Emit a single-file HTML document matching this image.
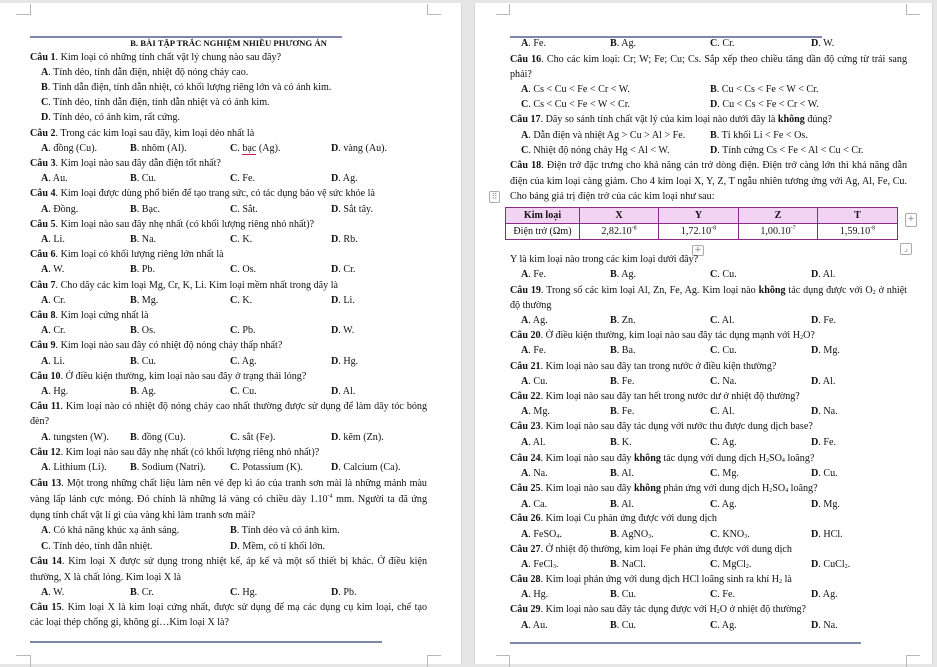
<!DOCTYPE html>
<html><head><meta charset="utf-8"><style>
*{margin:0;padding:0;box-sizing:border-box}
body{width:937px;height:667px;background:#e6e6e6;position:relative;overflow:hidden;font-family:"Liberation Serif","DejaVu Serif",serif;font-size:10.1px;color:#111}
.pg{position:absolute;top:3px;background:#fff;height:661px}
.l{position:absolute;white-space:nowrap;line-height:14px;height:14px}
.j{text-align:justify;text-align-last:justify;white-space:normal}
.o{position:absolute;white-space:nowrap}
b{font-weight:bold}
sub,sup{font-size:6px;line-height:0}
sub{vertical-align:-1px}
.rule{position:absolute;height:2px;background:#7b88a8}
.cm{position:absolute;border-color:#b8b8b8;border-style:solid;border-width:0}
table{border-collapse:collapse;position:absolute}
td{border:1.3px solid #8a2a8a;text-align:center;height:16px;font-size:10.1px;line-height:13px}
tr.h td{background:#f3d3f3;font-weight:bold}
.btn{position:absolute;width:12px;height:14px;border:1px solid #aaa;border-radius:2px;background:#fff;color:#888;font-size:11px;line-height:11px;text-align:center;font-family:"Liberation Sans",sans-serif}
</style></head><body>
<div class="pg" style="left:0;width:462px;border-right:1px solid #d4d4d4"></div>
<div class="pg" style="left:474px;width:459px;border-left:1px solid #d4d4d4;border-right:1px solid #d4d4d4"></div>
<div class="cm" style="left:16px;top:4px;width:15px;height:11px;border-right-width:1px;border-bottom-width:1px"></div>
<div class="cm" style="left:427px;top:4px;width:14px;height:11px;border-left-width:1px;border-bottom-width:1px"></div>
<div class="cm" style="left:16px;top:655px;width:15px;height:12px;border-right-width:1px;border-top-width:1px"></div>
<div class="cm" style="left:427px;top:655px;width:14px;height:12px;border-left-width:1px;border-top-width:1px"></div>
<div class="cm" style="left:496px;top:4px;width:14px;height:11px;border-right-width:1px;border-bottom-width:1px"></div>
<div class="cm" style="left:906px;top:4px;width:14px;height:11px;border-left-width:1px;border-bottom-width:1px"></div>
<div class="cm" style="left:496px;top:655px;width:14px;height:12px;border-right-width:1px;border-top-width:1px"></div>
<div class="cm" style="left:906px;top:655px;width:14px;height:12px;border-left-width:1px;border-top-width:1px"></div>

<div class="rule" style="left:30px;top:36px;width:312px"></div>
<div class="rule" style="left:30px;top:641px;width:352px"></div>
<div class="rule" style="left:510px;top:36px;width:312px"></div>
<div class="rule" style="left:510px;top:642px;width:351px"></div>

<!-- LEFT PAGE -->
<div class="l" style="left:30px;width:397px;top:36px;text-align:center;font-size:8.7px;font-weight:bold">B. BÀI TẬP TRẮC NGHIỆM NHIỀU PHƯƠNG ÁN</div>
<div class="l" style="left:30px;top:51px"><b>Câu 1</b>. Kim loại có những tính chất vật lý chung nào sau đây?</div>
<div class="l" style="left:41px;top:66px"><b>A</b>. Tính dẻo, tính dẫn điện, nhiệt độ nóng chảy cao.</div>
<div class="l" style="left:41px;top:81px"><b>B</b>. Tính dẫn điện, tính dẫn nhiệt, có khối lượng riêng lớn và có ánh kim.</div>
<div class="l" style="left:41px;top:96px"><b>C</b>. Tính dẻo, tính dẫn điện, tính dẫn nhiệt và có ánh kim.</div>
<div class="l" style="left:41px;top:111px"><b>D</b>. Tính dẻo, có ánh kim, rất cứng.</div>
<div class="l" style="left:30px;top:127px"><b>Câu 2</b>. Trong các kim loại sau đây, kim loại dẻo nhất là</div>
<div class="l" style="left:0;top:142px"><span class="o" style="left:41px"><b>A</b>. đồng (Cu).</span><span class="o" style="left:130px"><b>B</b>. nhôm (Al).</span><span class="o" style="left:230px"><b>C</b>. <span style="border-bottom:1px solid #d02050">bạc</span> (Ag).</span><span class="o" style="left:331px"><b>D</b>. vàng (Au).</span></div>
<div class="l" style="left:30px;top:157px"><b>Câu 3</b>. Kim loại nào sau đây dẫn điện tốt nhất?</div>
<div class="l" style="left:0;top:172px"><span class="o" style="left:41px"><b>A</b>. Au.</span><span class="o" style="left:130px"><b>B</b>. Cu.</span><span class="o" style="left:230px"><b>C</b>. Fe.</span><span class="o" style="left:331px"><b>D</b>. Ag.</span></div>
<div class="l" style="left:30px;top:187px"><b>Câu 4</b>. Kim loại được dùng phổ biến để tạo trang sức, có tác dụng bảo vệ sức khỏe là</div>
<div class="l" style="left:0;top:203px"><span class="o" style="left:41px"><b>A</b>. Đồng.</span><span class="o" style="left:130px"><b>B</b>. Bạc.</span><span class="o" style="left:230px"><b>C</b>. Sắt.</span><span class="o" style="left:331px"><b>D</b>. Sắt tây.</span></div>
<div class="l" style="left:30px;top:218px"><b>Câu 5</b>. Kim loại nào sau đây nhẹ nhất (có khối lượng riêng nhỏ nhất)?</div>
<div class="l" style="left:0;top:233px"><span class="o" style="left:41px"><b>A</b>. Li.</span><span class="o" style="left:130px"><b>B</b>. Na.</span><span class="o" style="left:230px"><b>C</b>. K.</span><span class="o" style="left:331px"><b>D</b>. Rb.</span></div>
<div class="l" style="left:30px;top:248px"><b>Câu 6</b>. Kim loại có khối lượng riêng lớn nhất là</div>
<div class="l" style="left:0;top:263px"><span class="o" style="left:41px"><b>A</b>. W.</span><span class="o" style="left:130px"><b>B</b>. Pb.</span><span class="o" style="left:230px"><b>C</b>. Os.</span><span class="o" style="left:331px"><b>D</b>. Cr.</span></div>
<div class="l" style="left:30px;top:279px"><b>Câu 7</b>. Cho dãy các kim loại Mg, Cr, K, Li. Kim loại mềm nhất trong dãy là</div>
<div class="l" style="left:0;top:294px"><span class="o" style="left:41px"><b>A</b>. Cr.</span><span class="o" style="left:130px"><b>B</b>. Mg.</span><span class="o" style="left:230px"><b>C</b>. K.</span><span class="o" style="left:331px"><b>D</b>. Li.</span></div>
<div class="l" style="left:30px;top:309px"><b>Câu 8</b>. Kim loại cứng nhất là</div>
<div class="l" style="left:0;top:324px"><span class="o" style="left:41px"><b>A</b>. Cr.</span><span class="o" style="left:130px"><b>B</b>. Os.</span><span class="o" style="left:230px"><b>C</b>. Pb.</span><span class="o" style="left:331px"><b>D</b>. W.</span></div>
<div class="l" style="left:30px;top:339px"><b>Câu 9</b>. Kim loại nào sau đây có nhiệt độ nóng chảy thấp nhất?</div>
<div class="l" style="left:0;top:355px"><span class="o" style="left:41px"><b>A</b>. Li.</span><span class="o" style="left:130px"><b>B</b>. Cu.</span><span class="o" style="left:230px"><b>C</b>. Ag.</span><span class="o" style="left:331px"><b>D</b>. Hg.</span></div>
<div class="l" style="left:30px;top:370px"><b>Câu 10</b>. Ở điều kiện thường, kim loại nào sau đây ở trạng thái lỏng?</div>
<div class="l" style="left:0;top:385px"><span class="o" style="left:41px"><b>A</b>. Hg.</span><span class="o" style="left:130px"><b>B</b>. Ag.</span><span class="o" style="left:230px"><b>C</b>. Cu.</span><span class="o" style="left:331px"><b>D</b>. Al.</span></div>
<div class="l j" style="left:30px;width:397px;top:400px"><b>Câu 11</b>. Kim loại nào có nhiệt độ nóng chảy cao nhất thường được sử dụng để làm dây tóc bóng</div>
<div class="l" style="left:30px;top:415px">đèn?</div>
<div class="l" style="left:0;top:431px"><span class="o" style="left:41px"><b>A</b>. tungsten (W).</span><span class="o" style="left:130px"><b>B</b>. đồng (Cu).</span><span class="o" style="left:230px"><b>C</b>. sắt (Fe).</span><span class="o" style="left:331px"><b>D</b>. kẽm (Zn).</span></div>
<div class="l" style="left:30px;top:446px"><b>Câu 12</b>. Kim loại nào sau đây nhẹ nhất (có khối lượng riêng nhỏ nhất)?</div>
<div class="l" style="left:0;top:461px"><span class="o" style="left:41px"><b>A</b>. Lithium (Li).</span><span class="o" style="left:130px"><b>B</b>. Sodium (Natri).</span><span class="o" style="left:230px"><b>C</b>. Potassium (K).</span><span class="o" style="left:331px"><b>D</b>. Calcium (Ca).</span></div>
<div class="l j" style="left:30px;width:397px;top:477px"><b>Câu 13</b>. Một trong những chất liệu làm nên vẻ đẹp kì ảo của tranh sơn mài là những mảnh màu</div>
<div class="l j" style="left:30px;width:397px;top:493px">vàng lấp lánh cực mỏng. Đó chính là những lá vàng có chiều dày 1.10<sup>-4</sup> mm. Người ta đã ứng</div>
<div class="l" style="left:30px;top:509px">dụng tính chất vật lí gì của vàng khi làm tranh sơn mài?</div>
<div class="l" style="left:0;top:524px"><span class="o" style="left:41px"><b>A</b>. Có khả năng khúc xạ ánh sáng.</span><span class="o" style="left:230px"><b>B</b>. Tính dẻo và có ánh kim.</span></div>
<div class="l" style="left:0;top:540px"><span class="o" style="left:41px"><b>C</b>. Tính dẻo, tính dẫn nhiệt.</span><span class="o" style="left:230px"><b>D</b>. Mềm, có tỉ khối lớn.</span></div>
<div class="l j" style="left:30px;width:397px;top:555px"><b>Câu 14</b>. Kim loại X được sử dụng trong nhiệt kế, áp kế và một số thiết bị khác. Ở điều kiện</div>
<div class="l" style="left:30px;top:571px">thường, X là chất lỏng. Kim loại X là</div>
<div class="l" style="left:0;top:586px"><span class="o" style="left:41px"><b>A</b>. W.</span><span class="o" style="left:130px"><b>B</b>. Cr.</span><span class="o" style="left:230px"><b>C</b>. Hg.</span><span class="o" style="left:331px"><b>D</b>. Pb.</span></div>
<div class="l j" style="left:30px;width:397px;top:601px"><b>Câu 15</b>. Kim loại X là kim loại cứng nhất, được sử dụng để mạ các dụng cụ kim loại, chế tạo</div>
<div class="l" style="left:30px;top:616px">các loại thép chống gỉ, không gỉ…Kim loại X là?</div>

<!-- RIGHT PAGE -->
<div class="l" style="left:0;top:37px"><span class="o" style="left:521px"><b>A</b>. Fe.</span><span class="o" style="left:610px"><b>B</b>. Ag.</span><span class="o" style="left:710px"><b>C</b>. Cr.</span><span class="o" style="left:811px"><b>D</b>. W.</span></div>
<div class="l j" style="left:510px;width:397px;top:53px"><b>Câu 16</b>. Cho các kim loại: Cr; W; Fe; Cu; Cs. Sắp xếp theo chiều tăng dần độ cứng từ trái sang</div>
<div class="l" style="left:510px;top:68px">phải?</div>
<div class="l" style="left:0;top:83px"><span class="o" style="left:521px"><b>A</b>. Cs &lt; Cu &lt; Fe &lt; Cr &lt; W.</span><span class="o" style="left:710px"><b>B</b>. Cu &lt; Cs &lt; Fe &lt; W &lt; Cr.</span></div>
<div class="l" style="left:0;top:98px"><span class="o" style="left:521px"><b>C</b>. Cs &lt; Cu &lt; Fe &lt; W &lt; Cr.</span><span class="o" style="left:710px"><b>D</b>. Cu &lt; Cs &lt; Fe &lt; Cr &lt; W.</span></div>
<div class="l" style="left:510px;top:113px"><b>Câu 17</b>. Dãy so sánh tính chất vật lý của kim loại nào dưới đây là <b>không</b> đúng?</div>
<div class="l" style="left:0;top:129px"><span class="o" style="left:521px"><b>A</b>. Dẫn điện và nhiệt Ag &gt; Cu &gt; Al &gt; Fe.</span><span class="o" style="left:710px"><b>B</b>. Tỉ khối Li &lt; Fe &lt; Os.</span></div>
<div class="l" style="left:0;top:144px"><span class="o" style="left:521px"><b>C</b>. Nhiệt độ nóng chảy Hg &lt; Al &lt; W.</span><span class="o" style="left:710px"><b>D</b>. Tính cứng Cs &lt; Fe &lt; Al &lt; Cu &lt; Cr.</span></div>
<div class="l j" style="left:510px;width:397px;top:159px"><b>Câu 18</b>. Điện trở đặc trưng cho khả năng cản trở dòng điện. Điện trở càng lớn thì khả năng dẫn</div>
<div class="l j" style="left:510px;width:397px;top:175px">điện của kim loại càng giảm. Cho 4 kim loại X, Y, Z, T ngẫu nhiên tương ứng với Ag, Al, Fe, Cu.</div>
<div class="l" style="left:510px;top:190px">Cho bảng giá trị điện trở của các kim loại như sau:</div>
<div class="btn" style="left:489px;top:191px;width:11px;height:12px;font-size:8px;line-height:9px">⠿</div>
<table style="left:505px;top:207px;width:393px">
<tr class="h"><td style="width:74px">Kim loại</td><td style="width:79px">X</td><td style="width:80px">Y</td><td style="width:79px">Z</td><td>T</td></tr>
<tr><td>Điện trở (Ωm)</td><td>2,82.10<sup>-8</sup></td><td>1,72.10<sup>-8</sup></td><td>1,00.10<sup>-7</sup></td><td>1,59.10<sup>-8</sup></td></tr>
</table>
<div class="btn" style="left:905px;top:213px">+</div>
<div class="btn" style="left:900px;top:243px;width:12px;height:12px;font-size:8px;line-height:10px">⌟</div>
<div class="btn" style="left:692px;top:245px;height:11px;line-height:9px">+</div>
<div class="l" style="left:510px;top:253px">Y là kim loại nào trong các kim loại dưới đây?</div>
<div class="l" style="left:0;top:268px"><span class="o" style="left:521px"><b>A</b>. Fe.</span><span class="o" style="left:610px"><b>B</b>. Ag.</span><span class="o" style="left:710px"><b>C</b>. Cu.</span><span class="o" style="left:811px"><b>D</b>. Al.</span></div>
<div class="l j" style="left:510px;width:397px;top:284px"><b>Câu 19</b>. Trong số các kim loại Al, Zn, Fe, Ag. Kim loại nào <b>không</b> tác dụng được với O<sub>2</sub> ở nhiệt</div>
<div class="l" style="left:510px;top:299px">độ thường</div>
<div class="l" style="left:0;top:314px"><span class="o" style="left:521px"><b>A</b>. Ag.</span><span class="o" style="left:610px"><b>B</b>. Zn.</span><span class="o" style="left:710px"><b>C</b>. Al.</span><span class="o" style="left:811px"><b>D</b>. Fe.</span></div>
<div class="l" style="left:510px;top:329px"><b>Câu 20</b>. Ở điều kiện thường, kim loại nào sau đây tác dụng mạnh với H<sub>2</sub>O?</div>
<div class="l" style="left:0;top:344px"><span class="o" style="left:521px"><b>A</b>. Fe.</span><span class="o" style="left:610px"><b>B</b>. Ba.</span><span class="o" style="left:710px"><b>C</b>. Cu.</span><span class="o" style="left:811px"><b>D</b>. Mg.</span></div>
<div class="l" style="left:510px;top:360px"><b>Câu 21</b>. Kim loại nào sau đây tan trong nước ở điều kiện thường?</div>
<div class="l" style="left:0;top:375px"><span class="o" style="left:521px"><b>A</b>. Cu.</span><span class="o" style="left:610px"><b>B</b>. Fe.</span><span class="o" style="left:710px"><b>C</b>. Na.</span><span class="o" style="left:811px"><b>D</b>. Al.</span></div>
<div class="l" style="left:510px;top:390px"><b>Câu 22</b>. Kim loại nào sau đây tan hết trong nước dư ở nhiệt độ thường?</div>
<div class="l" style="left:0;top:405px"><span class="o" style="left:521px"><b>A</b>. Mg.</span><span class="o" style="left:610px"><b>B</b>. Fe.</span><span class="o" style="left:710px"><b>C</b>. Al.</span><span class="o" style="left:811px"><b>D</b>. Na.</span></div>
<div class="l" style="left:510px;top:420px"><b>Câu 23</b>. Kim loại nào sau đây tác dụng với nước thu được dung dịch base?</div>
<div class="l" style="left:0;top:436px"><span class="o" style="left:521px"><b>A</b>. Al.</span><span class="o" style="left:610px"><b>B</b>. K.</span><span class="o" style="left:710px"><b>C</b>. Ag.</span><span class="o" style="left:811px"><b>D</b>. Fe.</span></div>
<div class="l" style="left:510px;top:452px"><b>Câu 24</b>. Kim loại nào sau đây <b>không</b> tác dụng với dung dịch H<sub>2</sub>SO<sub>4</sub> loãng?</div>
<div class="l" style="left:0;top:467px"><span class="o" style="left:521px"><b>A</b>. Na.</span><span class="o" style="left:610px"><b>B</b>. Al.</span><span class="o" style="left:710px"><b>C</b>. Mg.</span><span class="o" style="left:811px"><b>D</b>. Cu.</span></div>
<div class="l" style="left:510px;top:482px"><b>Câu 25</b>. Kim loại nào sau đây <b>không</b> phản ứng với dung dịch H<sub>2</sub>SO<sub>4</sub> loãng?</div>
<div class="l" style="left:0;top:498px"><span class="o" style="left:521px"><b>A</b>. Ca.</span><span class="o" style="left:610px"><b>B</b>. Al.</span><span class="o" style="left:710px"><b>C</b>. Ag.</span><span class="o" style="left:811px"><b>D</b>. Mg.</span></div>
<div class="l" style="left:510px;top:512px"><b>Câu 26</b>. Kim loại Cu phản ứng được với dung dịch</div>
<div class="l" style="left:0;top:528px"><span class="o" style="left:521px"><b>A</b>. FeSO<sub>4</sub>.</span><span class="o" style="left:610px"><b>B</b>. AgNO<sub>3</sub>.</span><span class="o" style="left:710px"><b>C</b>. KNO<sub>3</sub>.</span><span class="o" style="left:811px"><b>D</b>. HCl.</span></div>
<div class="l" style="left:510px;top:543px"><b>Câu 27</b>. Ở nhiệt độ thường, kim loại Fe phản ứng được với dung dịch</div>
<div class="l" style="left:0;top:558px"><span class="o" style="left:521px"><b>A</b>. FeCl<sub>3</sub>.</span><span class="o" style="left:610px"><b>B</b>. NaCl.</span><span class="o" style="left:710px"><b>C</b>. MgCl<sub>2</sub>.</span><span class="o" style="left:811px"><b>D</b>. CuCl<sub>2</sub>.</span></div>
<div class="l" style="left:510px;top:573px"><b>Câu 28</b>. Kim loại phản ứng với dung dịch HCl loãng sinh ra khí H<sub>2</sub> là</div>
<div class="l" style="left:0;top:588px"><span class="o" style="left:521px"><b>A</b>. Hg.</span><span class="o" style="left:610px"><b>B</b>. Cu.</span><span class="o" style="left:710px"><b>C</b>. Fe.</span><span class="o" style="left:811px"><b>D</b>. Ag.</span></div>
<div class="l" style="left:510px;top:603px"><b>Câu 29</b>. Kim loại nào sau đây tác dụng được với H<sub>2</sub>O ở nhiệt độ thường?</div>
<div class="l" style="left:0;top:619px"><span class="o" style="left:521px"><b>A</b>. Au.</span><span class="o" style="left:610px"><b>B</b>. Cu.</span><span class="o" style="left:710px"><b>C</b>. Ag.</span><span class="o" style="left:811px"><b>D</b>. Na.</span></div>
</body></html>
